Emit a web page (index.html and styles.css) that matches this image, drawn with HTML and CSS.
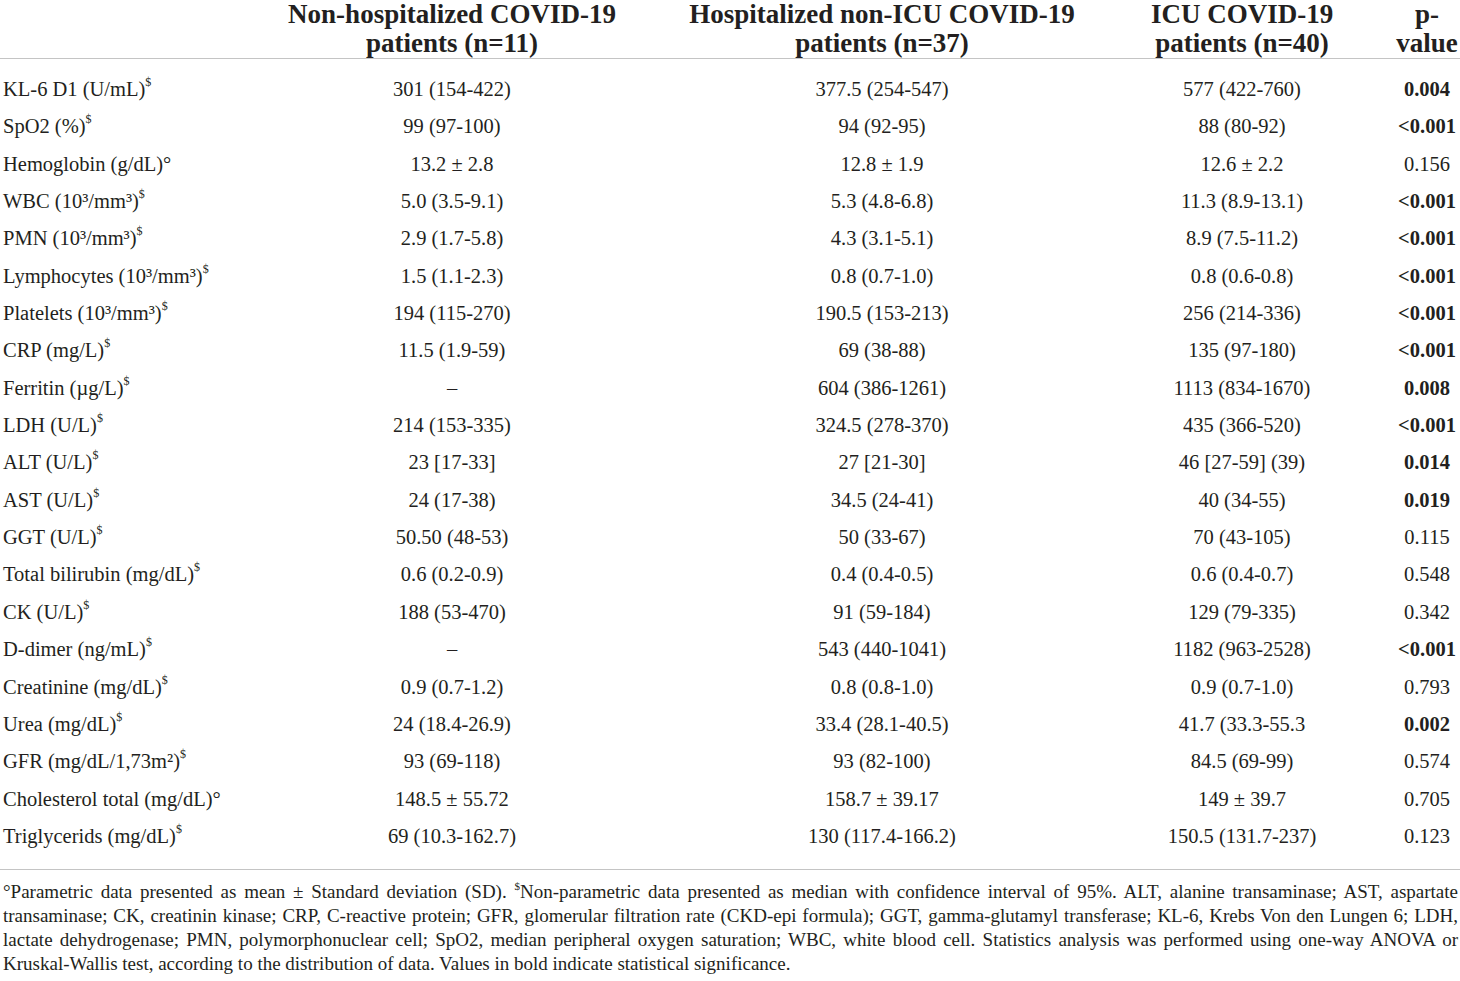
FILE: index.html
```html
<!DOCTYPE html>
<html lang="en">
<head>
<meta charset="utf-8">
<title>Laboratory findings</title>
<link rel="stylesheet" href="styles.css">
</head>
<body>
<div class="page">
<table class="data">
  <colgroup>
    <col class="c1"><col class="c2"><col class="c3"><col class="c4"><col class="c5">
  </colgroup>
  <thead>
    <tr>
      <th class="lab"></th>
      <th>Non-hospitalized COVID-19<br>patients (n=11)</th>
      <th>Hospitalized non-ICU COVID-19<br>patients (n=37)</th>
      <th>ICU COVID-19<br>patients (n=40)</th>
      <th class="pv">p-<br>value</th>
    </tr>
  </thead>
  <tbody>
    <tr><td class="lab">KL-6 D1 (U/mL)<sup>$</sup></td><td>301 (154-422)</td><td>377.5 (254-547)</td><td>577 (422-760)</td><td class="pv"><b>0.004</b></td></tr>
    <tr><td class="lab">SpO2 (%)<sup>$</sup></td><td>99 (97-100)</td><td>94 (92-95)</td><td>88 (80-92)</td><td class="pv"><b>&lt;0.001</b></td></tr>
    <tr><td class="lab">Hemoglobin (g/dL)°</td><td>13.2 ± 2.8</td><td>12.8 ± 1.9</td><td>12.6 ± 2.2</td><td class="pv">0.156</td></tr>
    <tr><td class="lab">WBC (10³/mm³)<sup>$</sup></td><td>5.0 (3.5-9.1)</td><td>5.3 (4.8-6.8)</td><td>11.3 (8.9-13.1)</td><td class="pv"><b>&lt;0.001</b></td></tr>
    <tr><td class="lab">PMN (10³/mm³)<sup>$</sup></td><td>2.9 (1.7-5.8)</td><td>4.3 (3.1-5.1)</td><td>8.9 (7.5-11.2)</td><td class="pv"><b>&lt;0.001</b></td></tr>
    <tr><td class="lab">Lymphocytes (10³/mm³)<sup>$</sup></td><td>1.5 (1.1-2.3)</td><td>0.8 (0.7-1.0)</td><td>0.8 (0.6-0.8)</td><td class="pv"><b>&lt;0.001</b></td></tr>
    <tr><td class="lab">Platelets (10³/mm³)<sup>$</sup></td><td>194 (115-270)</td><td>190.5 (153-213)</td><td>256 (214-336)</td><td class="pv"><b>&lt;0.001</b></td></tr>
    <tr><td class="lab">CRP (mg/L)<sup>$</sup></td><td>11.5 (1.9-59)</td><td>69 (38-88)</td><td>135 (97-180)</td><td class="pv"><b>&lt;0.001</b></td></tr>
    <tr><td class="lab">Ferritin (µg/L)<sup>$</sup></td><td>–</td><td>604 (386-1261)</td><td>1113 (834-1670)</td><td class="pv"><b>0.008</b></td></tr>
    <tr><td class="lab">LDH (U/L)<sup>$</sup></td><td>214 (153-335)</td><td>324.5 (278-370)</td><td>435 (366-520)</td><td class="pv"><b>&lt;0.001</b></td></tr>
    <tr><td class="lab">ALT (U/L)<sup>$</sup></td><td>23 [17-33]</td><td>27 [21-30]</td><td>46 [27-59] (39)</td><td class="pv"><b>0.014</b></td></tr>
    <tr><td class="lab">AST (U/L)<sup>$</sup></td><td>24 (17-38)</td><td>34.5 (24-41)</td><td>40 (34-55)</td><td class="pv"><b>0.019</b></td></tr>
    <tr><td class="lab">GGT (U/L)<sup>$</sup></td><td>50.50 (48-53)</td><td>50 (33-67)</td><td>70 (43-105)</td><td class="pv">0.115</td></tr>
    <tr><td class="lab">Total bilirubin (mg/dL)<sup>$</sup></td><td>0.6 (0.2-0.9)</td><td>0.4 (0.4-0.5)</td><td>0.6 (0.4-0.7)</td><td class="pv">0.548</td></tr>
    <tr><td class="lab">CK (U/L)<sup>$</sup></td><td>188 (53-470)</td><td>91 (59-184)</td><td>129 (79-335)</td><td class="pv">0.342</td></tr>
    <tr><td class="lab">D-dimer (ng/mL)<sup>$</sup></td><td>–</td><td>543 (440-1041)</td><td>1182 (963-2528)</td><td class="pv"><b>&lt;0.001</b></td></tr>
    <tr><td class="lab">Creatinine (mg/dL)<sup>$</sup></td><td>0.9 (0.7-1.2)</td><td>0.8 (0.8-1.0)</td><td>0.9 (0.7-1.0)</td><td class="pv">0.793</td></tr>
    <tr><td class="lab">Urea (mg/dL)<sup>$</sup></td><td>24 (18.4-26.9)</td><td>33.4 (28.1-40.5)</td><td>41.7 (33.3-55.3</td><td class="pv"><b>0.002</b></td></tr>
    <tr><td class="lab">GFR (mg/dL/1,73m²)<sup>$</sup></td><td>93 (69-118)</td><td>93 (82-100)</td><td>84.5 (69-99)</td><td class="pv">0.574</td></tr>
    <tr><td class="lab">Cholesterol total (mg/dL)°</td><td>148.5 ± 55.72</td><td>158.7 ± 39.17</td><td>149 ± 39.7</td><td class="pv">0.705</td></tr>
    <tr><td class="lab">Triglycerids (mg/dL)<sup>$</sup></td><td>69 (10.3-162.7)</td><td>130 (117.4-166.2)</td><td>150.5 (131.7-237)</td><td class="pv">0.123</td></tr>
  </tbody>
</table>
<div class="notes">
  <span class="ln">°Parametric data presented as mean ± Standard deviation (SD). <sup>$</sup>Non-parametric data presented as median with confidence interval of 95%. ALT, alanine transaminase; AST, aspartate</span>
  <span class="ln">transaminase; CK, creatinin kinase; CRP, C-reactive protein; GFR, glomerular filtration rate (CKD-epi formula); GGT, gamma-glutamyl transferase; KL-6, Krebs Von den Lungen 6; LDH,</span>
  <span class="ln">lactate dehydrogenase; PMN, polymorphonuclear cell; SpO2, median peripheral oxygen saturation; WBC, white blood cell. Statistics analysis was performed using one-way ANOVA or</span>
  <span class="ln last">Kruskal-Wallis test, according to the distribution of data. Values in bold indicate statistical significance.</span>
</div>
</div>
</body>
</html>
```
FILE: styles.css
```css
html, body {
  margin: 0;
  padding: 0;
  background: #ffffff;
}

.page {
  width: 1460px;
  font-family: "Liberation Serif", "Times New Roman", serif;
  color: #231f20;
}

.data {
  width: 1460px;
  border-collapse: collapse;
  table-layout: fixed;
}

.c1 { width: 260px; }
.c2 { width: 384px; }
.c3 { width: 476px; }
.c4 { width: 244px; }
.c5 { width: 96px; }

.data th {
  font-size: 27px;
  font-weight: bold;
  line-height: 29px;
  padding: 0;
  text-align: center;
  vertical-align: top;
  border-bottom: 1px solid #c4c4c4;
  height: 58px;
}

.data th.pv,
.data td.pv {
  padding-left: 30px;
}

.data td {
  font-size: 20.5px;
  line-height: 37.35px;
  height: 37.35px;
  padding: 0;
  text-align: center;
  white-space: nowrap;
}

.data td.lab {
  text-align: left;
  padding-left: 3px;
}

.data tbody tr:first-child td {
  padding-top: 12px;
}

.data tbody tr:last-child td {
  padding-bottom: 14px;
}

.data sup {
  font-size: 12px;
  line-height: 0;
  vertical-align: 10px;
}

.notes {
  border-top: 1px solid #c4c4c4;
  padding: 10px 2px 0 3px;
  font-size: 19px;
  line-height: 24px;
}

.notes .ln {
  display: block;
  text-align: justify;
  text-align-last: justify;
  white-space: nowrap;
}

.notes .ln.last {
  text-align-last: left;
}

.notes sup {
  font-size: 11px;
  line-height: 0;
  vertical-align: 8px;
}
```
